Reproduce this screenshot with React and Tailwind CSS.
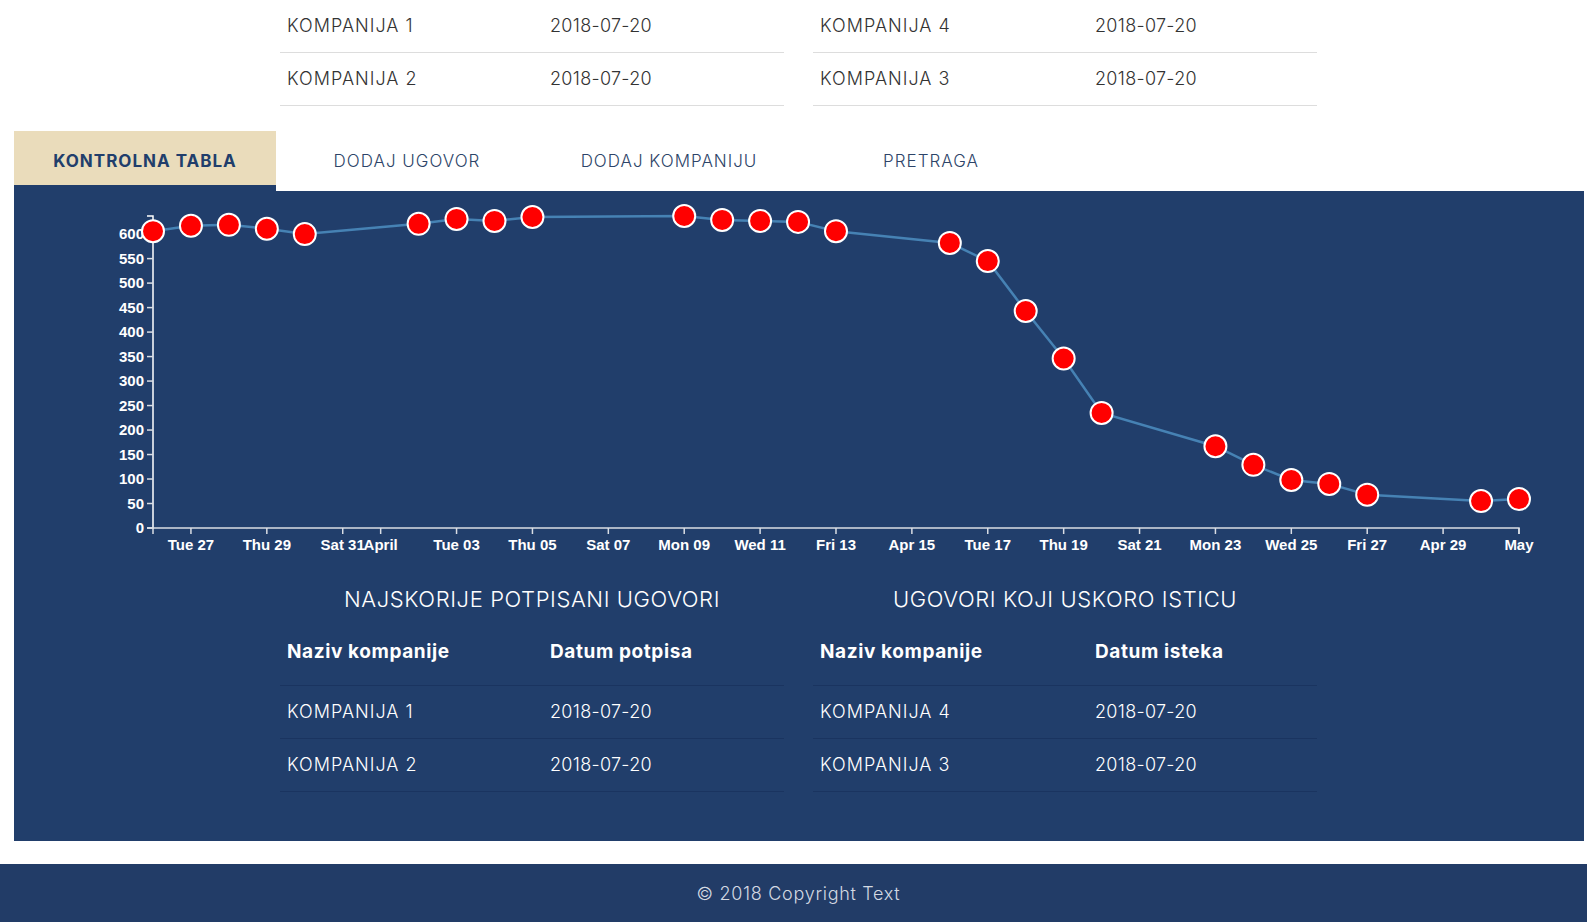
import React from "react";

const FONT = { fontFamily: "Inter, 'Noto Sans', sans-serif" };

// days after Mon 26 March, value
const POINTS = [
  [0, 606], [1, 617], [2, 619], [3, 611], [4, 600],
  [7, 621], [8, 631], [9, 627], [10, 635],
  [14, 637], [15, 629], [16, 627], [17, 625], [18, 606],
  [21, 582], [22, 545], [23, 443], [24, 346], [25, 235],
  [28, 167], [29, 129], [30, 98], [31, 90], [32, 68],
  [35, 55], [36, 59],
];

const X_TICKS = [
  [1, "Tue 27"], [3, "Thu 29"], [5, "Sat 31"], [6, "April"], [8, "Tue 03"],
  [10, "Thu 05"], [12, "Sat 07"], [14, "Mon 09"], [16, "Wed 11"], [18, "Fri 13"],
  [20, "Apr 15"], [22, "Tue 17"], [24, "Thu 19"], [26, "Sat 21"], [28, "Mon 23"],
  [30, "Wed 25"], [32, "Fri 27"], [34, "Apr 29"], [36, "May"],
];

const X0 = 139;
const DAY = 37.944;
const Y0 = 337;
const MAXV = 637;
const H = 312;

const sx = (d) => X0 + d * DAY;
const sy = (v) => Y0 - (v * H) / MAXV;

function Chart() {
  const line = POINTS.map(([d, v], i) => `${i ? "L" : "M"}${sx(d).toFixed(1)},${sy(v).toFixed(1)}`).join(" ");
  const yTicks = Array.from({ length: 13 }, (_, i) => i * 50);
  const labelStyle = { fontFamily: "'Liberation Sans', Arial, sans-serif", fontWeight: 700, fontSize: 15 };

  return (
    <svg width="1570" height="388" className="block">
      {/* y axis */}
      <path d={`M${X0 - 6},${sy(MAXV)} H${X0} V${Y0} H${X0 - 6}`} fill="none" stroke="#ffffff" strokeWidth="1.5" />
      {yTicks.map((v) => (
        <g key={v}>
          <line x1={X0 - 6} x2={X0} y1={sy(v)} y2={sy(v)} stroke="#d9dde4" strokeWidth="1.5" />
          <text x={X0 - 9} y={sy(v)} dy="0.34em" textAnchor="end" fill="#ffffff" style={labelStyle}>
            {v}
          </text>
        </g>
      ))}

      {/* x axis */}
      <path d={`M${X0},${Y0 + 6} V${Y0} H${sx(36)} V${Y0 + 6}`} fill="none" stroke="#d9dde4" strokeWidth="1.5" />
      {X_TICKS.map(([d, label]) => (
        <g key={label}>
          <line x1={sx(d)} x2={sx(d)} y1={Y0} y2={Y0 + 6} stroke="#d9dde4" strokeWidth="1.5" />
          <text x={sx(d)} y={Y0 + 22} textAnchor="middle" fill="#ffffff" style={labelStyle}>
            {label}
          </text>
        </g>
      ))}

      {/* data */}
      <path d={line} fill="none" stroke="#4682b4" strokeWidth="2.5" />
      {POINTS.map(([d, v]) => (
        <circle key={d} cx={sx(d)} cy={sy(v)} r="11" fill="#ff0000" stroke="#ffffff" strokeWidth="2" />
      ))}
    </svg>
  );
}

const Row = ({ name, date, dark, w1 }) => (
  <div className={`flex items-center h-[53px] pb-[2px] border-b ${dark ? "border-[#1a3460] text-white" : "border-[#dddddd] text-[#333333]"}`}>
    <div className={`${w1} pl-[7px] tracking-[1px]`}>{name}</div>
    <div className="pl-[7px] tracking-[0.3px]">{date}</div>
  </div>
);

const Tab = ({ label }) => (
  <div className="w-[262px] pb-[6px] pt-2 flex items-center justify-center text-[#2d4468]">{label}</div>
);

export default function App() {
  return (
    <div className="bg-white min-h-screen text-[18px] font-light" style={FONT}>
      {/* TOP TABLES */}
      <div className="flex gap-[29px] ml-[280px]">
        <div className="w-[504px]">
          <Row name="KOMPANIJA 1" date="2018-07-20" w1="w-[263px]" />
          <Row name="KOMPANIJA 2" date="2018-07-20" w1="w-[263px]" />
        </div>
        <div className="w-[504px]">
          <Row name="KOMPANIJA 4" date="2018-07-20" w1="w-[275px]" />
          <Row name="KOMPANIJA 3" date="2018-07-20" w1="w-[275px]" />
        </div>
      </div>

      {/* TABS */}
      <div className="flex ml-[14px] mt-[25px] h-[60px] text-[17px] tracking-[1px]">
        <div className="w-[262px] pt-2 bg-[#eadcbb] border-b-[6px] border-[#213e6b] flex items-center justify-center font-bold text-[#213e6b]">
          KONTROLNA TABLA
        </div>
        <Tab label="DODAJ UGOVOR" />
        <Tab label="DODAJ KOMPANIJU" />
        <Tab label="PRETRAGA" />
      </div>

      {/* PANEL */}
      <div className="ml-[14px] mr-[3px] bg-[#213e6b] pb-[49px]">
        <Chart />
        <div className="flex gap-[29px] ml-[266px] text-white">
          <div className="w-[504px]">
            <div className="h-10 flex items-center justify-center text-[22px] tracking-[0.6px]">NAJSKORIJE POTPISANI UGOVORI</div>
            <div className="flex items-center h-[67px] border-b border-[#1a3460] font-bold text-[19px] tracking-[0.6px]">
              <div className="w-[263px] pl-[7px]">Naziv kompanije</div>
              <div className="pl-[7px]">Datum potpisa</div>
            </div>
            <Row name="KOMPANIJA 1" date="2018-07-20" w1="w-[263px]" dark />
            <Row name="KOMPANIJA 2" date="2018-07-20" w1="w-[263px]" dark />
          </div>
          <div className="w-[504px]">
            <div className="h-10 flex items-center justify-center text-[22px] tracking-[0.6px]">UGOVORI KOJI USKORO ISTICU</div>
            <div className="flex items-center h-[67px] border-b border-[#1a3460] font-bold text-[19px] tracking-[0.6px]">
              <div className="w-[275px] pl-[7px]">Naziv kompanije</div>
              <div className="pl-[7px]">Datum isteka</div>
            </div>
            <Row name="KOMPANIJA 4" date="2018-07-20" w1="w-[275px]" dark />
            <Row name="KOMPANIJA 3" date="2018-07-20" w1="w-[275px]" dark />
          </div>
        </div>
      </div>

      {/* FOOTER */}
      <div className="mt-[23px] h-[58px] bg-[#223c67] flex items-center justify-center pl-[10px] text-[#d3d9e2] text-[18px] tracking-[0.7px]">
        © 2018 Copyright Text
      </div>
    </div>
  );
}
